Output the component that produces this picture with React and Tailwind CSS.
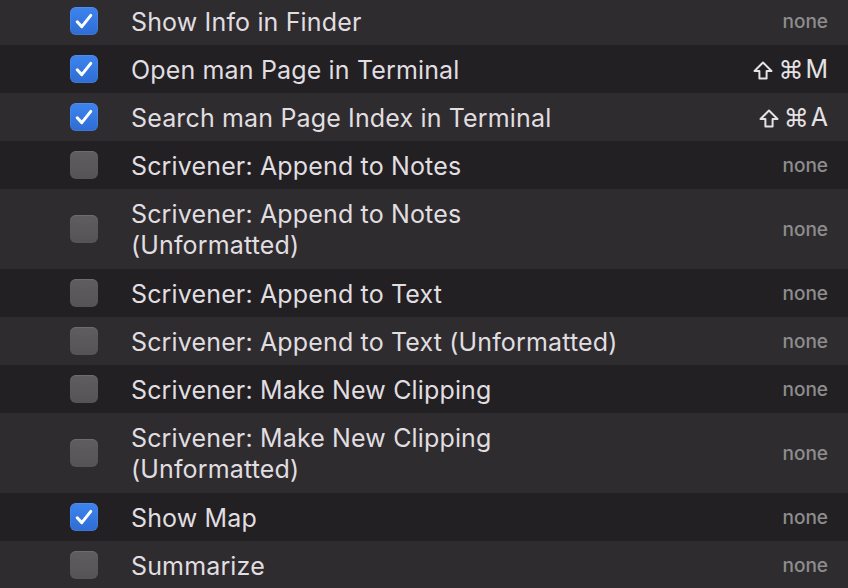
import React from "react";

const rows = [
  { label: ["Show Info in Finder"], checked: true, sc: null },
  { label: ["Open man Page in Terminal"], checked: true, sc: "M" },
  { label: ["Search man Page Index in Terminal"], checked: true, sc: "A" },
  { label: ["Scrivener: Append to Notes"], checked: false, sc: null },
  { label: ["Scrivener: Append to Notes", "(Unformatted)"], checked: false, sc: null },
  { label: ["Scrivener: Append to Text"], checked: false, sc: null },
  { label: ["Scrivener: Append to Text (Unformatted)"], checked: false, sc: null },
  { label: ["Scrivener: Make New Clipping"], checked: false, sc: null },
  { label: ["Scrivener: Make New Clipping", "(Unformatted)"], checked: false, sc: null },
  { label: ["Show Map"], checked: true, sc: null },
  { label: ["Summarize"], checked: false, sc: null },
];

function Check({ checked }) {
  if (checked) {
    return (
      <div className="w-[28px] h-[28px] rounded-[6px] bg-gradient-to-b from-[#3e84ee] to-[#2e6dd4] flex items-center justify-center shadow-[inset_0_0_0_0.5px_rgba(255,255,255,0.15)]">
        <svg width="20" height="18" viewBox="0 0 20 18" fill="none">
          <path d="M3.2 9.8 L7.8 14.6 L16.8 3.4" stroke="white" strokeWidth="3" strokeLinecap="round" strokeLinejoin="round" />
        </svg>
      </div>
    );
  }
  return (
    <div className="w-[28px] h-[28px] rounded-[6px] bg-gradient-to-b from-[#5f5d5f] to-[#555355] shadow-[inset_0_0.5px_0_rgba(255,255,255,0.2)]" />
  );
}

function Shift() {
  return (
    <svg width="20" height="19" viewBox="0 0 20 19" fill="none" className="mr-[5px]">
      <path d="M10 1.5 L18.5 10 L13.6 10 L13.6 17.5 L6.4 17.5 L6.4 10 L1.5 10 Z" stroke="#e4e2e4" strokeWidth="2" strokeLinejoin="round" />
    </svg>
  );
}

export default function App() {
  return (
    <div className="w-[848px] h-[588px] overflow-hidden bg-[#2e2c2e]" style={{ fontFamily: "Inter, 'Noto Sans', sans-serif" }}>
      <div className="mt-[-3px] flex flex-col">
        {rows.map((r, i) => {
          const tall = r.label.length > 1;
          return (
            <div
              key={i}
              className={`flex items-center pl-[70px] pr-[20px] ${tall ? "h-[80px]" : "h-[48px]"} ${i % 2 === 0 ? "bg-[#2e2c2e]" : "bg-[#222022]"}`}
            >
              <Check checked={r.checked} />
              <div className="ml-[33px] pt-[2px] flex-1 text-[25px] tracking-[0.15px] leading-[31px] text-[#e0dee0]">
                {r.label.map((l, j) => (
                  <div key={j}>{l}</div>
                ))}
              </div>
              {r.sc ? (
                <div className="pt-[2px] text-[25px] text-[#e4e2e4] flex items-center">
                  <Shift />
                  <span style={{ fontFamily: "'DejaVu Sans', sans-serif" }} className="text-[25px] leading-none mr-[2px]">⌘</span>
                  <span>{r.sc}</span>
                </div>
              ) : (
                <div className="pt-[2px] text-[19px] font-medium text-[#8e8c8e]">none</div>
              )}
            </div>
          );
        })}
      </div>
    </div>
  );
}
